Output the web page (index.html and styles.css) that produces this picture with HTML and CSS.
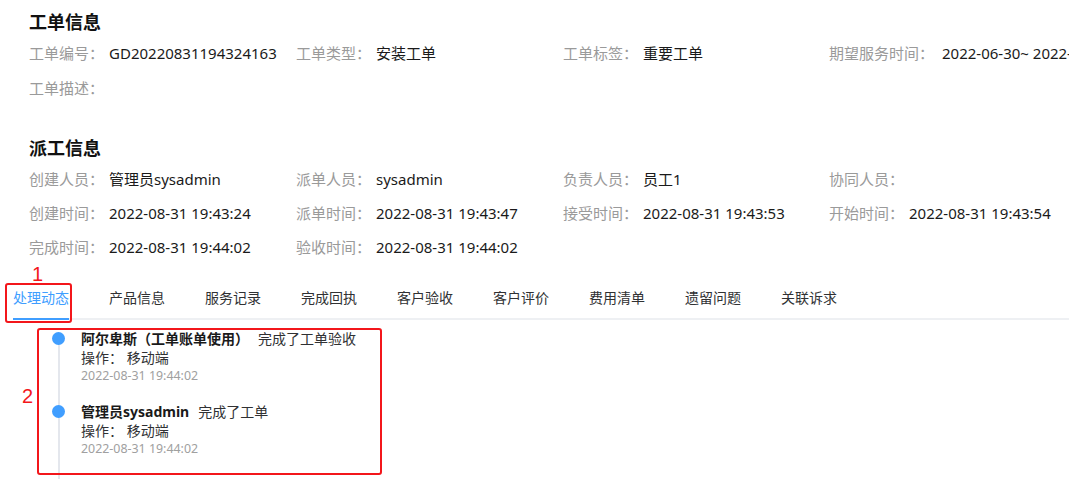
FILE: index.html
```html
<!DOCTYPE html>
<html lang="zh-CN">
<head>
<meta charset="utf-8">
<title>工单详情</title>
<link rel="stylesheet" href="styles.css">
</head>
<body>
<div class="page">
  <h2 class="sec-title first-title">工单信息</h2>
  <div class="info-grid grid-a">
    <div class="cell"><span class="lbl">工单编号：</span><span class="val">GD20220831194324163</span></div>
    <div class="cell"><span class="lbl">工单类型：</span><span class="val">安装工单</span></div>
    <div class="cell"><span class="lbl">工单标签：</span><span class="val">重要工单</span></div>
    <div class="cell"><span class="lbl">期望服务时间：</span><span class="val val-wide">2022-06-30~ 2022-07-01</span></div>
    <div class="cell"><span class="lbl">工单描述：</span><span class="val"></span></div>
  </div>

  <h2 class="sec-title second-title">派工信息</h2>
  <div class="info-grid grid-b">
    <div class="cell"><span class="lbl">创建人员：</span><span class="val">管理员sysadmin</span></div>
    <div class="cell"><span class="lbl">派单人员：</span><span class="val">sysadmin</span></div>
    <div class="cell"><span class="lbl">负责人员：</span><span class="val">员工1</span></div>
    <div class="cell"><span class="lbl">协同人员：</span><span class="val"></span></div>
    <div class="cell"><span class="lbl">创建时间：</span><span class="val">2022-08-31 19:43:24</span></div>
    <div class="cell"><span class="lbl">派单时间：</span><span class="val">2022-08-31 19:43:47</span></div>
    <div class="cell"><span class="lbl">接受时间：</span><span class="val">2022-08-31 19:43:53</span></div>
    <div class="cell"><span class="lbl">开始时间：</span><span class="val">2022-08-31 19:43:54</span></div>
    <div class="cell"><span class="lbl">完成时间：</span><span class="val">2022-08-31 19:44:02</span></div>
    <div class="cell"><span class="lbl">验收时间：</span><span class="val">2022-08-31 19:44:02</span></div>
  </div>

  <div class="tabs">
    <span class="tab active">处理动态</span>
    <span class="tab">产品信息</span>
    <span class="tab">服务记录</span>
    <span class="tab">完成回执</span>
    <span class="tab">客户验收</span>
    <span class="tab">客户评价</span>
    <span class="tab">费用清单</span>
    <span class="tab">遗留问题</span>
    <span class="tab">关联诉求</span>
  </div>

  <div class="timeline">
    <div class="tl-item tl-first">
      <div class="tl-axis"><span class="tl-dot"></span></div>
      <div class="tl-content">
        <div class="tl-head"><b>阿尔卑斯（工单账单使用）</b><span class="tl-act">完成了工单验收</span></div>
        <div class="tl-op">操作： 移动端</div>
        <div class="tl-time">2022-08-31 19:44:02</div>
      </div>
    </div>
    <div class="tl-item tl-last">
      <div class="tl-axis"><span class="tl-dot"></span></div>
      <div class="tl-content">
        <div class="tl-head"><b>管理员sysadmin</b><span class="tl-act">完成了工单</span></div>
        <div class="tl-op">操作： 移动端</div>
        <div class="tl-time">2022-08-31 19:44:02</div>
      </div>
    </div>
  </div>

  <div class="mark mark-box1"></div>
  <div class="mark-num num1">1</div>
  <div class="mark mark-box2"></div>
  <div class="mark-num num2">2</div>
</div>
</body>
</html>
```

FILE: styles.css
```css
html, body {
  margin: 0;
  padding: 0;
  background: #ffffff;
  overflow: hidden;
}

body {
  width: 1069px;
  height: 479px;
  font-family: "Noto Sans", "Noto Sans CJK SC", sans-serif;
  color: #222;
}

.page {
  position: relative;
  height: 479px;
}

.sec-title {
  margin: 0;
  padding-left: 29px;
  font-size: 18px;
  font-weight: 700;
  line-height: 24px;
  color: #111;
}

.first-title {
  padding-top: 10px;
}

.second-title {
  margin-top: 38px;
}

.info-grid {
  display: grid;
  grid-template-columns: 267px 267px 266px 266px;
  padding-left: 29px;
  margin-top: 9px;
  white-space: nowrap;
  font-size: 15px;
  line-height: 20px;
}

.grid-a {
  row-gap: 15px;
}

.grid-b {
  row-gap: 14px;
}

.cell {
  display: flex;
}

.lbl {
  color: #9a9a9a;
  margin-right: 5px;
}

.val {
  color: #1a1a1a;
}

.val-wide {
  margin-left: 3px;
}

.tabs {
  display: flex;
  margin: 21px 0 0 13px;
  height: 40px;
  border-bottom: 2px solid #eef0f3;
  box-sizing: content-box;
}

.tab {
  height: 40px;
  line-height: 40px;
  font-size: 14px;
  color: #303133;
  margin-right: 40px;
  box-sizing: border-box;
  white-space: nowrap;
}

.tab.active {
  color: #409eff;
  height: 42px;
  border-bottom: 2px solid #409eff;
  line-height: 40px;
}

.timeline {
  padding-left: 52px;
  margin-top: 9px;
}

.tl-item {
  display: flex;
}

.tl-axis {
  width: 13px;
  flex: none;
  background: linear-gradient(#e4e7ed, #e4e7ed) center bottom / 2px 100% no-repeat;
}

.tl-first .tl-axis {
  background-size: 2px calc(100% - 10px);
}

.tl-dot {
  display: block;
  width: 13px;
  height: 13px;
  margin-top: 3px;
  border-radius: 50%;
  background: #409eff;
}

.tl-content {
  margin-left: 16px;
  padding-bottom: 17px;
  font-size: 14px;
}

.tl-last .tl-content {
  padding-bottom: 30px;
}

.tl-head {
  line-height: 19px;
  color: #1a1a1a;
  white-space: nowrap;
}

.tl-head b {
  font-weight: 700;
}

.tl-act {
  margin-left: 9px;
  color: #303133;
}

.tl-op {
  line-height: 19px;
  color: #303133;
}

.tl-time {
  font-size: 12.4px;
  line-height: 18px;
  color: #a0a0a0;
}

.mark {
  position: absolute;
  border: 2.5px solid #f3161b;
  border-radius: 3px;
  box-sizing: border-box;
}

.mark-box1 {
  left: 5px;
  top: 283px;
  width: 67px;
  height: 40px;
}

.mark-box2 {
  left: 37px;
  top: 328px;
  width: 345px;
  height: 147px;
}

.mark-num {
  position: absolute;
  color: #f3161b;
  font-family: "Liberation Sans", Arial, sans-serif;
  font-size: 20px;
  line-height: 20px;
}

.num1 {
  left: 32px;
  top: 264px;
}

.num2 {
  left: 22px;
  top: 386px;
}
```
